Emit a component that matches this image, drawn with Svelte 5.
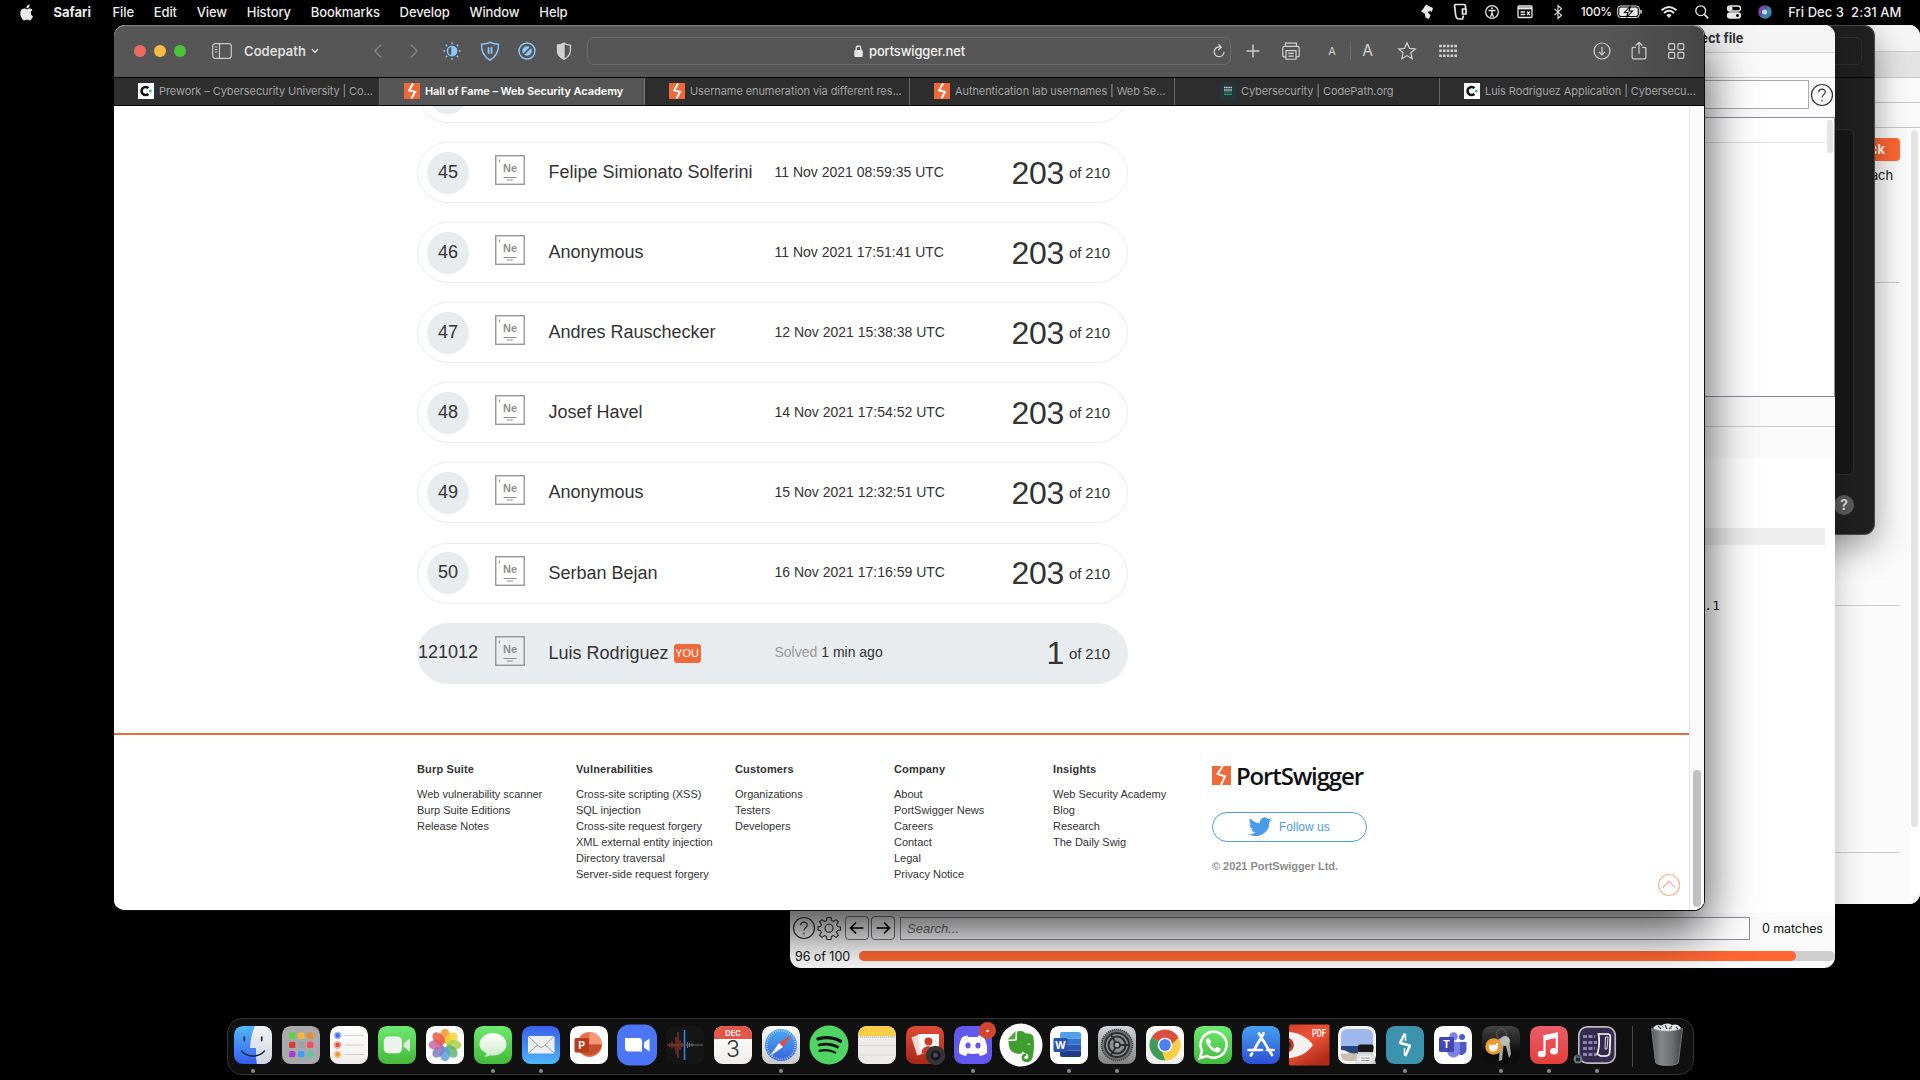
<script>
  const menus = ['File', 'Edit', 'View', 'History', 'Bookmarks', 'Develop', 'Window', 'Help'];

  const tabs = [
    { icon: 'code', title: 'Prework – Cybersecurity University | Co...' },
    { icon: 'bolt', title: 'Hall of Fame – Web Security Academy', active: true },
    { icon: 'bolt', title: 'Username enumeration via different res...' },
    { icon: 'bolt', title: 'Authentication lab usernames | Web Se...' },
    { icon: 'org', title: 'Cybersecurity | CodePath.org', short: true },
    { icon: 'code', title: 'Luis Rodriguez Application | Cybersecu...' }
  ];

  const rows = [
    { rank: '45', name: 'Felipe Simionato Solferini', date: '11 Nov 2021 08:59:35 UTC' },
    { rank: '46', name: 'Anonymous', date: '11 Nov 2021 17:51:41 UTC' },
    { rank: '47', name: 'Andres Rauschecker', date: '12 Nov 2021 15:38:38 UTC' },
    { rank: '48', name: 'Josef Havel', date: '14 Nov 2021 17:54:52 UTC' },
    { rank: '49', name: 'Anonymous', date: '15 Nov 2021 12:32:51 UTC' },
    { rank: '50', name: 'Serban Bejan', date: '16 Nov 2021 17:16:59 UTC' }
  ];

  const columns = [
    { title: 'Burp Suite', links: ['Web vulnerability scanner', 'Burp Suite Editions', 'Release Notes'] },
    {
      title: 'Vulnerabilities',
      links: ['Cross-site scripting (XSS)', 'SQL injection', 'Cross-site request forgery', 'XML external entity injection', 'Directory traversal', 'Server-side request forgery']
    },
    { title: 'Customers', links: ['Organizations', 'Testers', 'Developers'] },
    { title: 'Company', links: ['About', 'PortSwigger News', 'Careers', 'Contact', 'Legal', 'Privacy Notice'] },
    { title: 'Insights', links: ['Web Security Academy', 'Blog', 'Research', 'The Daily Swig'] }
  ];

  const petals = ['#f39a2b', '#f6d232', '#a9cf46', '#5fb574', '#5d9fe0', '#7d7fc4', '#c268a8', '#ee5a45'];
  const pads = ['#5fd13c', '#f5b73c', '#ee8a2c', '#d8412c', '#9aa3ab', '#f0505c', '#a53fd0', '#3d9df2', '#5cc9a6'];

  const dock = [
    { id: 'finder', on: true }, { id: 'launchpad' }, { id: 'reminders' }, { id: 'facetime' }, { id: 'photos' },
    { id: 'messages', on: true }, { id: 'mail', on: true }, { id: 'powerpoint' }, { id: 'zoom' }, { id: 'voice' },
    { id: 'calendar' }, { id: 'safari', on: true }, { id: 'spotify' }, { id: 'notes' }, { id: 'booth' },
    { id: 'discord', on: true }, { id: 'evernote' }, { id: 'word', on: true }, { id: 'settings', on: true }, { id: 'chrome' },
    { id: 'whatsapp' }, { id: 'appstore' }, { id: 'pdf' }, { id: 'preview' }, { id: 'burp', on: true },
    { id: 'teams' }, { id: 'keychain', on: true }, { id: 'music', on: true }, { id: 'keyboard', on: true }
  ];
</script>

{#snippet favicon(kind)}
  <svg class="favicon" viewBox="0 0 16 16">
    {#if kind === 'code'}
      <rect width="16" height="16" fill="#fff" />
      <path d="M10.400 5.200A4 4 0 1 0 10.400 10.800" fill="none" stroke="#111" stroke-width="2.600" />
      <circle cx="12.300" cy="8" r="1.500" fill="#3fc28a" />
    {:else if kind === 'bolt'}
      <rect width="16" height="16" fill="#f0693a" />
      <path d="M9 .6 5.200 7.400 11 8.800 7.600 15.400" fill="none" stroke="#fff" stroke-width="2" />
    {:else}
      <rect width="16" height="16" fill="#25353d" />
      <path d="M4 4.500h8M4 7h8" stroke="#c3ced1" stroke-width="1.400" stroke-dasharray="1.600 .5" />
      <path d="M4 9h8M4 11.400h8" stroke="#2a9a78" stroke-width="1.200" />
    {/if}
  </svg>
{/snippet}

{#snippet element()}
  <svg class="element" viewBox="0 0 30 30">
    <rect x=".75" y=".75" width="28.500" height="28.500" fill="none" stroke="#8e8e8e" stroke-width="1.300" />
    <path d="M4.300 4.500v3" stroke="#8e8e8e" />
    <text x="15" y="17.200" text-anchor="middle">Ne</text>
    <path d="M8.500 22.500h13M12 25h6" stroke="#8e8e8e" stroke-width="1.100" />
  </svg>
{/snippet}

{#snippet appIcon(id)}
  <svg class="app" viewBox="-4 -4 46 46">
    {#if id === 'finder'}
      <rect width="38" height="38" rx="8.800" fill="url(#g-finder)" />
      <path d="M21 0h8.200A8.800 8.800 0 0 1 38 8.800v20.400a8.800 8.800 0 0 1-8.800 8.800H23c-1-5-1-9-1-16h-6C16.400 14 18 6 21 0z" fill="url(#g-face)" />
      <path d="M10.300 11v3.600M27.700 11v3.600" stroke="#152a44" stroke-width="1.700" stroke-linecap="round" />
      <path d="M7.500 25c6 6.700 17 6.700 23 0" fill="none" stroke="#152a44" stroke-width="1.400" stroke-linecap="round" />
    {:else if id === 'launchpad'}
      <rect width="38" height="38" rx="8.800" fill="#a9a9ab" />
      {#each pads as pad, i}
        <rect x={7 + (i % 3) * 9} y={6.5 + Math.floor(i / 3) * 9.2} width="6.400" height="6.400" rx="1.500" fill={pad} />
      {/each}
    {:else if id === 'reminders'}
      <rect width="38" height="38" rx="8.800" fill="url(#g-white)" />
      <path d="M14.500 9.500H34M14.500 19H34M14.500 28.500H34" stroke="#c9c9c9" stroke-width=".9" />
      <g fill="none" stroke-width=".6">
        <circle cx="7.600" cy="9.500" r="3.300" stroke="#3a6ff0" /><circle cx="7.600" cy="19" r="3.300" stroke="#ea4c39" /><circle cx="7.600" cy="28.500" r="3.300" stroke="#eb9a2b" />
      </g>
      <circle cx="7.600" cy="9.500" r="2.400" fill="#3a6ff0" /><circle cx="7.600" cy="19" r="2.400" fill="#ea4c39" /><circle cx="7.600" cy="28.500" r="2.400" fill="#eb9a2b" />
    {:else if id === 'facetime'}
      <rect width="38" height="38" rx="8.800" fill="url(#g-green)" />
      <rect x="5.800" y="10.500" width="18.200" height="16.800" rx="4.500" fill="#edf3ec" /><path d="M25.500 17.200 32 12.200v13.600l-6.500-5z" fill="#dfe9dd" />
    {:else if id === 'photos'}
      <rect width="38" height="38" rx="8.800" fill="#fff" />
      {#each petals as petal, i}
        <ellipse cx="19" cy="10" rx="5" ry="7.300" fill={petal} opacity=".86" transform={`rotate(${i * 45} 19 19)`} />
      {/each}
    {:else if id === 'messages'}
      <rect width="38" height="38" rx="8.800" fill="url(#g-green)" />
      <path d="M10 30.500c2-.8 2.500-2 2.600-3.200C8 25.300 5.500 22 5.500 18.200 5.500 12 11.500 7 19 7s13.500 5 13.500 11.200S26.500 29.500 19 29.500c-1 0-2-.1-3-.3-1.500 1-3.500 1.500-6 1.300z" fill="url(#g-bubble)" />
    {:else if id === 'mail'}
      <rect width="38" height="38" rx="8.800" fill="url(#g-mail)" />
      <rect x="6" y="10" width="26.500" height="17.500" rx="1.500" fill="#eeeff0" />
      <path d="m6.500 10.500 10.500 10q2.200 2 4.400 0l10.500-10M6.500 27l9-8M32 27l-9-8" fill="none" stroke="#85888c" stroke-width=".8" />
    {:else if id === 'powerpoint'}
      <rect width="38" height="38" rx="8.800" fill="#fff" />
      <circle cx="19.500" cy="18.500" r="12.500" fill="#e9714a" /><path d="M19.500 6v12.500H32A12.500 12.500 0 0 0 19.500 6z" fill="#f59a77" /><path d="M8 18.500h24a12.500 12.500 0 0 1-24 3z" fill="#c6502d" />
      <rect x="4.500" y="12" width="14.500" height="14.500" rx="1.500" fill="#b83b1c" /><text class="office" x="11.700" y="22.900">P</text>
    {:else if id === 'zoom'}
      <rect x="-1" y="-1.500" width="40" height="41" rx="12.500" fill="#4c76f5" />
      <path d="M7 12h14a3 3 0 0 1 3 3v10.500H10.500a3.500 3.500 0 0 1-3.500-3.500zM26 16.500l5.500-4v13l-5.500-4z" fill="#fff" />
    {:else if id === 'voice'}
      <rect width="38" height="38" rx="8.800" fill="#161616" />
      <path d="M1 19h17M4 17v4M6 15.500v7M8 17.500v4M10 11v17M12 6v26M14 14v10M16 17v4" stroke="#8e392d" stroke-width="1.200" />
      <path d="M20 19h17M21.500 16v6M23.500 17v4M26 17.500v3" stroke="#6b6b6b" stroke-width="1.200" />
      <path d="M18.500 4v30" stroke="#3583d8" stroke-width="1.600" />
    {:else if id === 'calendar'}
      <rect width="38" height="38" rx="8.800" fill="url(#g-white)" />
      <path d="M0 13V8.800A8.800 8.800 0 0 1 8.800 0h20.400A8.800 8.800 0 0 1 38 8.800V13z" fill="#e2574a" />
      <text class="month" x="19" y="9.700">DEC</text><text class="day" x="19" y="31">3</text>
    {:else if id === 'safari'}
      <rect width="38" height="38" rx="8.800" fill="url(#g-silver)" />
      <circle cx="19" cy="19" r="16" fill="url(#g-compass)" /><circle cx="19" cy="19" r="14.300" fill="none" stroke="#dceafb" stroke-width="2" stroke-dasharray=".6 1.650" />
      <path d="m30 9-13 8 4 4z" fill="#e64a3c" /><path d="m8 30 9-13 4 4z" fill="#fff" />
    {:else if id === 'spotify'}
      <circle cx="19" cy="19" r="19.500" fill="#50d565" />
      <g fill="none" stroke="#111" stroke-linecap="round"><path d="M8 12.800c8-2 16-1.200 22.500 2.400" stroke-width="3.400" /><path d="M9 19c7-1.600 13-1 18.800 2" stroke-width="2.700" /><path d="M9.500 24.800c6-1.300 11-.8 15.800 1.800" stroke-width="2.200" /></g>
    {:else if id === 'notes'}
      <rect width="38" height="38" rx="8.800" fill="#ecebe7" />
      <path d="M0 10V8.800A8.800 8.800 0 0 1 8.800 0h20.400A8.800 8.800 0 0 1 38 8.800V10z" fill="#f7cd45" />
      <path d="M0 19.500h38M0 29h38" stroke="#d0cfca" stroke-width=".7" /><path d="M0 11h38" stroke="#a7a49a" stroke-width="1" stroke-dasharray="1 1" />
    {:else if id === 'booth'}
      <rect width="38" height="38" rx="8.800" fill="url(#g-booth)" />
      <path d="m5 11 9-3 5 19-8 3z" fill="#f3d8d2" stroke="#b9321f" stroke-width=".6" /><path d="M12 8h21v19H14z" fill="#fff" />
      <circle cx="22.500" cy="15.500" r="4" fill="#c93c2a" /><path d="M15.500 27c0-9 14-9 14 0z" fill="#c93c2a" />
      <circle cx="29.500" cy="29.500" r="9.700" fill="#353535" /><circle cx="29.500" cy="29.500" r="5" fill="#17171b" /><circle cx="29.500" cy="29" r="2.500" fill="#3c4a60" />
    {:else if id === 'discord'}
      <rect width="38" height="38" rx="8.800" fill="#6358ee" />
      <path d="M13.500 9c-2.500.4-4 1-5.500 2-2.500 4.500-3.500 9-3 15.500 2.500 1.800 4.500 2.500 7 3l1.500-2.800c3.500 1 7.500 1 11 0l1.500 2.800c2.500-.5 4.500-1.200 7-3 .5-6.500-.5-11-3-15.500-1.500-1-3-1.600-5.500-2l-1 1.700c-3-.4-6-.4-9 0z" fill="#fff" transform="translate(0 .5)" />
      <ellipse cx="14" cy="19.500" rx="2.600" ry="3" fill="#6358ee" /><ellipse cx="24" cy="19.500" rx="2.600" ry="3" fill="#6358ee" />
      <circle cx="33.500" cy="4.500" r="8.500" fill="#d4452e" /><circle cx="33.500" cy="5" r="1.200" fill="#fff" />
    {:else if id === 'evernote'}
      <circle cx="19" cy="19" r="21.500" fill="#fff" />
      <path d="M13.500 5v6.500q0 2-2 2H5.500z" fill="#3e9e2f" opacity=".9" /><path d="M15 5.500q6-1.500 8.500 1.700c5 .3 7.500.8 8 4.800.9 7 .5 13-.8 19-.8 3.700-3 5-6 5-4.500 0-5.500-3-5-5.500.5-2 2-3.200 4.500-3v2.500c-1.300 0-1.900.5-1.900 1.500 0 1.200 1 1.600 2.200 1.500 1.700-.2 2.200-1.700 1.700-3.500-.6-2.200-4-2.200-5.300-4-.8 1.700-2.400 2.700-5.100 2.200-6-1-9.300-3.500-9.300-12.700h6q2.500 0 2.500-2.500z" fill="#3e9e2f" />
      <path d="M25 18.500q2-2.500 4 .7-2.200-.9-4-.7z" fill="#fff" />
    {:else if id === 'word'}
      <rect width="38" height="38" rx="8.800" fill="#fff" />
      <path d="M10 8a2 2 0 0 1 2-2h17a2 2 0 0 1 2 2v4.500H10z" fill="#50a0e8" /><path d="M10 12.500h21v6H10z" fill="#3672d0" /><path d="M10 18.500h21v6H10z" fill="#2858b4" /><path d="M10 24.500h21V29a2 2 0 0 1-2 2H12a2 2 0 0 1-2-2z" fill="#1f3b88" />
      <rect x="3.500" y="12" width="14" height="14" rx="1.500" fill="#2a52b0" /><text class="office" x="10.500" y="22.700">W</text>
    {:else if id === 'settings'}
      <rect width="38" height="38" rx="8.800" fill="url(#g-settings)" />
      <circle cx="19" cy="19" r="15.500" fill="#6e6f71" stroke="#3e3e40" stroke-width="1.500" stroke-dasharray="1.200 .9" /><circle cx="19" cy="19" r="12" fill="#8d8e90" stroke="#303032" stroke-width="2" />
      <circle cx="19" cy="19" r="8.500" fill="none" stroke="#2d2d2f" stroke-width="2" /><circle cx="19" cy="19" r="3" fill="#aaa" stroke="#2d2d2f" stroke-width="1.500" />
      <path d="M22 19h10M17.500 16.500l-5-8.500M17.500 21.500l-5 8.500" stroke="#2d2d2f" stroke-width="1.800" />
    {:else if id === 'chrome'}
      <rect width="38" height="38" rx="8.800" fill="url(#g-white)" />
      <path d="M19 19 5.600 11.200A15.500 15.500 0 0 1 32.400 11.200z" fill="#d9503f" /><path d="M19 19l13.400-7.800A15.500 15.500 0 0 1 19 34.500z" fill="#f7ce46" /><path d="M19 19v15.500A15.500 15.500 0 0 1 5.600 11.200z" fill="#3f9b55" />
      <path d="M19 11.500h13.600L25 19z" fill="#d9503f" /><path d="M25.700 22.500 19 34.500l-3-9z" fill="#f7ce46" /><circle cx="19" cy="19" r="7.300" fill="#fff" /><circle cx="19" cy="19" r="5.900" fill="#4f7ff0" />
    {:else if id === 'whatsapp'}
      <rect width="38" height="38" rx="8.800" fill="url(#g-green)" />
      <path d="m6 32 2-7.300A13 13 0 1 1 13 30z" fill="none" stroke="#fff" stroke-width="2.600" />
      <path d="M14 11.500c-2 1-2.500 3.500-1 6.500 2 4 5 7 9 8.300 3 .8 5-1 4.700-3.500l-3.700-2-2 2c-2.500-1-4-2.700-5.200-5l1.600-2z" fill="#fff" />
    {:else if id === 'appstore'}
      <rect width="38" height="38" rx="8.800" fill="url(#g-store)" />
      <path d="M17 7.500l13 21.500M21.500 7.500 12 24M10 27.500l-1.200 2M6.500 24H20M25 24h6.500" stroke="#fff" stroke-width="2.700" stroke-linecap="round" fill="none" />
    {:else if id === 'pdf'}
      <rect x="-1" y="-1.500" width="40.500" height="41" rx="1.500" fill="url(#g-pdf)" />
      <path d="M-1 6c12 1 20 7 24 13-5 7-12 12-24 13z" fill="#f4f2f1" /><path d="M-1 12a7.500 7.500 0 0 1 0 14z" fill="#c83725" /><path d="M-1 15.500a4 4 0 0 1 0 7z" fill="#333" />
      <text class="pdf" x="29" y="11" textLength="14" lengthAdjust="spacingAndGlyphs">PDF</text>
    {:else if id === 'preview'}
      <rect width="38" height="38" rx="8.800" fill="#f2f2f0" />
      <path d="M3 9a6 6 0 0 1 6-6h20a6 6 0 0 1 6 6v12H3z" fill="#a0b9ec" /><path d="M3 20h32v8H3z" fill="#29477c" /><path d="M3 27c8-3 10 2 16 0v8H9a6 6 0 0 1-6-6z" fill="#c9bfae" /><path d="M3 24q5 0 8 3-5 1-8 0z" fill="#fff" />
      <path d="M20 26h15l3 12H17z" fill="#ddd" opacity=".9" /><rect x="20" y="18.500" width="15.500" height="7.500" rx="2" fill="#181818" /><path d="M22 30h11v6H21z" fill="#f5f5f5" /><path d="M23 32h9M23 34.500h8" stroke="#777" stroke-width=".8" />
    {:else if id === 'burp'}
      <rect width="38" height="38" rx="8.800" fill="#3c93ae" />
      <path d="M18.800 7.500 14 17l10 2.500-4.700 10.500" fill="none" stroke="#fff" stroke-width="2.600" stroke-linejoin="bevel" />
      <path d="M19.500 8v7M18.500 22v7.500" stroke="#fff" stroke-width="1.500" />
    {:else if id === 'teams'}
      <rect width="38" height="38" rx="8.800" fill="#fff" />
      <circle cx="28" cy="11" r="3" fill="#5059c9" /><path d="M24 16h8.500v8a5.500 5.500 0 0 1-8.500 4z" fill="#5059c9" /><circle cx="19.500" cy="10.500" r="4.200" fill="#7b83eb" /><path d="M13 16h13v9a6.500 6.500 0 0 1-13 0z" fill="#7b83eb" />
      <rect x="5" y="11" width="15" height="15" rx="1.500" fill="#4048b4" /><text class="office" x="12.500" y="22.200">T</text>
    {:else if id === 'keychain'}
      <rect width="38" height="38" rx="8.800" fill="url(#g-dark)" />
      <circle cx="19.500" cy="8" r="5" fill="none" stroke="#55514a" stroke-width="1.500" />
      <path d="m18 13 4 1-2 20-3 1zM22 12l5 1 2 15-2 4zM15 14l5-2-2 13-3 3z" fill="#a7a9a5" /><circle cx="23" cy="15" r="5" fill="#b9bbb7" />
      <circle cx="11.500" cy="20.500" r="8.200" fill="#ef9a2e" /><path d="M7 18l3 1.500c1-1.500 3-1 4 0v-2.500h2v4.500q-1 4-5 4-4-.5-4-4z" fill="#fff" />
    {:else if id === 'music'}
      <rect width="38" height="38" rx="8.800" fill="url(#g-music)" />
      <path d="M14.500 27.500V10.200L26.800 7.500V24.500" fill="none" stroke="#fff" stroke-width="2.200" /><path d="M14.500 10.500v4l12.300-2.700v-4z" fill="#fff" /><ellipse cx="11.700" cy="28" rx="3.900" ry="3.200" fill="#fff" /><ellipse cx="24" cy="25.200" rx="3.900" ry="3.200" fill="#fff" />
    {:else if id === 'keyboard'}
      <rect x=".8" y=".8" width="36.400" height="36.400" rx="8.500" fill="#342c50" stroke="#bcb9bd" stroke-width="1.700" />
      <path d="M5 10.500h12M5 16.500h14M5 22.500h12M5 28.500h14" stroke="#8a83ac" stroke-width="3" stroke-dasharray="4 1.500" />
      <path d="M20.500 8h9q3 0 2.800 3l-.6 15q-.2 4-4 4h-5.200l-3.200-2q3-9 1.200-20z" fill="#342c50" stroke="#fff" stroke-width="1.700" /><path d="M27.500 11h2.500l-1 12h-2z" fill="none" stroke="#ddd" stroke-width="1" />
      <circle cx="0" cy="33" r="4.500" fill="#6b7780" /><rect x="-2" y="32" width="4" height="3.200" fill="#1d2226" /><path d="M-1.200 32v-1.500a1.200 1.200 0 0 1 2.400 0V32" fill="none" stroke="#1d2226" stroke-width=".8" />
    {/if}
  </svg>
{/snippet}

<svg class="defs" width="0" height="0" aria-hidden="true">
  <defs>
    <linearGradient id="g-finder" x2="0" y2="1"><stop stop-color="#4fb8f8" /><stop offset="1" stop-color="#3a5cf0" /></linearGradient>
    <linearGradient id="g-face" x2="0" y2="1"><stop stop-color="#f3f3f5" /><stop offset="1" stop-color="#cfd5e2" /></linearGradient>
    <linearGradient id="g-white" x2="0" y2="1"><stop stop-color="#fff" /><stop offset="1" stop-color="#efeeec" /></linearGradient>
    <linearGradient id="g-green" x2="0" y2="1"><stop stop-color="#6cea70" /><stop offset="1" stop-color="#44b93a" /></linearGradient>
    <linearGradient id="g-bubble" x2="0" y2="1"><stop stop-color="#fff" /><stop offset="1" stop-color="#cdebc8" /></linearGradient>
    <linearGradient id="g-mail" x2="0" y2="1"><stop stop-color="#3a5fec" /><stop offset="1" stop-color="#4cb6f8" /></linearGradient>
    <linearGradient id="g-compass" x2="0" y2="1"><stop stop-color="#49a9f0" /><stop offset="1" stop-color="#3a64dc" /></linearGradient>
    <linearGradient id="g-silver" x2="0" y2="1"><stop stop-color="#fbfbfb" /><stop offset="1" stop-color="#c9cacc" /></linearGradient>
    <linearGradient id="g-booth" x2="0" y2="1"><stop stop-color="#e14a35" /><stop offset="1" stop-color="#a82717" /></linearGradient>
    <linearGradient id="g-settings" x2="0" y2="1"><stop stop-color="#ccd6dd" /><stop offset="1" stop-color="#85827f" /></linearGradient>
    <linearGradient id="g-store" x2="0" y2="1"><stop stop-color="#46a0ee" /><stop offset="1" stop-color="#2d4fd8" /></linearGradient>
    <linearGradient id="g-pdf" x2=".6" y2="1"><stop stop-color="#d6402e" /><stop offset=".5" stop-color="#ee5337" /><stop offset="1" stop-color="#b32c1c" /></linearGradient>
    <linearGradient id="g-dark" x2="0" y2="1"><stop stop-color="#434343" /><stop offset=".7" stop-color="#0c0c0c" /></linearGradient>
    <linearGradient id="g-music" x2="0" y2="1"><stop stop-color="#e85c6a" /><stop offset="1" stop-color="#e63f3b" /></linearGradient>
    <linearGradient id="g-bin"><stop stop-color="#555b5e" /><stop offset=".3" stop-color="#85898b" /><stop offset=".65" stop-color="#6c7073" /><stop offset="1" stop-color="#404447" /></linearGradient>
    <linearGradient id="g-siri" x1="0" x2="1" y1=".2" y2=".8"><stop stop-color="#b0468f" /><stop offset=".35" stop-color="#5a4bb0" /><stop offset=".65" stop-color="#3f8f9a" /><stop offset="1" stop-color="#3a62d8" /></linearGradient>
  </defs>
</svg>

<div class="desktop">
  <!-- Rearmost light window -->
  <section class="window back">
    <div class="back-title"></div>
    <div class="back-strip"></div>
    <div class="back-line"></div>
    <div class="back-line"></div>
    <div class="back-body">
      <div class="back-main">
        <div class="panel first"><span class="attack">ck</span><span class="attach">ach</span></div>
        <div class="panel second"></div>
        <div class="panel third"></div>
        <div class="panel fourth"></div>
      </div>
      <div class="back-scroll"><i></i></div>
    </div>
  </section>

  <!-- Dark window -->
  <section class="window dark">
    <div class="dark-top"><div class="dark-field"></div></div>
    <div class="dark-panel"></div>
    <span class="dark-help">?</span>
  </section>

  <!-- Burp Suite window -->
  <section class="window burp">
    <header class="burp-title">ect file</header>
    <div class="burp-gap"></div>
    <div class="burp-filter">
      <div class="burp-input"></div>
      <svg class="round-help" viewBox="0 0 24 24"><circle cx="12" cy="12" r="10.500" /><path d="M8.700 9.300c.2-4.400 6.800-4 6.600-.3-.1 2.500-3.300 2.800-3.300 5.500M12 16.800v1.600" /></svg>
    </div>
    <div class="burp-list"><div class="burp-head"></div><i></i></div>
    <div class="burp-tabs"></div>
    <div class="burp-sub"></div>
    <div class="burp-editor">
      <div class="hl"></div>
      <code>.1</code>
    </div>
    <div class="burp-search">
      <svg class="round-help" viewBox="0 0 24 24"><circle cx="12" cy="12" r="10.500" /><path d="M8.700 9.300c.2-4.400 6.800-4 6.600-.3-.1 2.500-3.300 2.800-3.300 5.500M12 16.800v1.600" /></svg>
      <svg class="gear" viewBox="0 0 24 24"><path d="M10 1.500h4l.5 3 2 .9 2.600-1.800 2.300 2.300-1.800 2.600.9 2 3 .5v3l-3 .5-.9 2 1.800 2.600-2.300 2.300-2.600-1.800-2 .9-.5 3h-4l-.5-3-2-.9-2.600 1.800-2.300-2.300 1.800-2.600-.9-2-2.500-.5v-3l2.500-.5.9-2-1.800-2.600 2.300-2.300 2.600 1.800 2-.9z" /><circle cx="12" cy="12.300" r="4" /></svg>
      <span class="arrow"><svg viewBox="0 0 24 24"><path d="M19 12H5.500M11 6l-6 6 6 6" /></svg></span>
      <span class="arrow"><svg viewBox="0 0 24 24"><path d="M5 12h13.500M13 6l6 6-6 6" /></svg></span>
      <div class="search-box">Search...</div>
      <span class="matches">0 matches</span>
    </div>
    <div class="burp-progress"><span>96 of 100</span><div class="track"><div class="fill"></div></div></div>
  </section>

  <!-- Safari window -->
  <section class="window safari">
    <header class="toolbar">
      <div class="lights"><i class="red"></i><i class="yellow"></i><i class="green"></i></div>
      <svg class="sidebar" viewBox="0 0 20 16"><rect x=".7" y=".7" width="18.600" height="14.600" rx="2.500" /><path d="M7.500 1v14M2.800 4h2.500M2.800 6.500h2.500M2.800 9h2.500" /></svg>
      <span class="profile">Codepath</span>
      <svg class="chev" viewBox="0 0 8 6"><path d="m1 1.300 3 3 3-3" /></svg>
      <div class="nav-icons">
        <svg class="dim" viewBox="0 0 24 24"><path d="m15.500 5-7 7 7 7" /></svg>
        <svg class="dim" viewBox="0 0 24 24"><path d="m8.500 5 7 7-7 7" /></svg>
        <svg class="blue" viewBox="0 0 24 24"><circle cx="12" cy="12" r="5" /><path d="M12 7a5 5 0 0 1 0 10z" fill="#8cc8ff" /><path d="M12 2.500v2M12 19.500v2M2.500 12h2M19.500 12h2M5.300 5.300l1.400 1.400M17.300 17.300l1.400 1.400M18.700 5.300l-1.400 1.400M6.700 17.300l-1.400 1.400" /></svg>
        <svg class="blue" viewBox="0 0 24 24"><path d="M2.700 4.700q4.800 0 9.300-2 4.500 2 9.300 2 .2 12-9.300 17.300Q2.500 16.700 2.700 4.700z" /><path d="M10.400 8v7M13.600 8v7" stroke-width="1.900" /></svg>
        <svg class="blue" viewBox="0 0 24 24"><circle cx="12" cy="12" r="8.700" /><circle cx="12" cy="12" r="5.200" fill="#8cc8ff" stroke="none" /><path d="m7 17 10-10" stroke="#565656" stroke-width="1.800" /></svg>
        <svg class="pale" viewBox="0 0 24 24"><path d="M12 3.500q3 2 7 2.200V12q-.5 6-7 9-6.500-3-7-9V5.700q4-.2 7-2.200z" /><path d="M12 3.500V21q-6.500-3-7-9V5.700q4-.2 7-2.200z" fill="#d0d0d0" /></svg>
      </div>
      <div class="url">
        <svg class="lock" viewBox="0 0 9 12"><rect x=".3" y="5" width="8.400" height="7" rx="1.200" /><path d="M2.200 5.500V3.300a2.300 2.300 0 0 1 4.600 0v2.200" fill="none" stroke="#e6e6e6" stroke-width="1.300" /></svg>
        <span>portswigger.net</span>
        <svg class="reload" viewBox="0 0 14 16"><path d="M9 4.300A4.900 4.900 0 1 0 12 9M6.500 1.300 9.300 4.300 6.300 7" /></svg>
      </div>
      <div class="right-icons">
        <svg viewBox="0 0 24 24"><path d="M12 5v14M5 12h14" stroke-width="1.600" /></svg>
        <svg viewBox="0 0 24 24"><path d="M6 7V3.500h12V7M6 18.500H4.500Q3 18.500 3 17V9q0-2 2-2h14q2 0 2 2v8q0 1.500-1.500 1.500H18M6.500 11.500h11V21h-11zM9 14.500h6M9 17.500h6" /></svg>
        <span class="small-a">A</span>
        <span class="big-a">A</span>
        <svg viewBox="0 0 24 24"><path d="m12 3 2.700 6.100 6.300.6-4.800 4.300 1.500 6.500L12 17l-5.700 3.500L7.800 14 3 9.700l6.300-.6z" /></svg>
        <svg viewBox="0 0 24 24"><path d="M2.400 6.500h19.400M2.400 11.800h19.400M2.400 17.100h19.400" stroke-width="2.800" stroke-dasharray="2.800 1.350" /></svg>
        <svg class="after-gap" viewBox="0 0 24 24"><circle cx="12" cy="12" r="8.700" /><path d="M12 7.500v8.500M8.700 13l3.300 3.300 3.300-3.300" /></svg>
        <svg viewBox="0 0 24 24"><path d="M8.500 8H6Q4.500 8 4.500 9.500V19Q4.500 20.500 6 20.500h12q1.500 0 1.500-1.500V9.500Q19.500 8 18 8h-2.500M12 15V2.500M8.500 6 12 2.500 15.500 6" /></svg>
        <svg viewBox="0 0 24 24"><rect x="4" y="4" width="6.500" height="6.500" rx="1.200" /><rect x="14" y="4" width="6.500" height="6.500" rx="1.200" /><rect x="4" y="13.500" width="6.500" height="6.500" rx="1.200" /><rect x="14" y="13.500" width="6.500" height="6.500" rx="1.200" /></svg>
      </div>
    </header>

    <nav class="tabs">
      {#each tabs as tab}
        <div class="tab" class:active={tab.active} class:short={tab.short}>
          {@render favicon(tab.icon)}<span>{tab.title}</span>
        </div>
      {/each}
    </nav>

    <div class="page">
      <main>
        <div class="board">
          <div class="row"><span class="rank"></span></div>
          {#each rows as row}
            <div class="row">
              <span class="rank">{row.rank}</span>
              {@render element()}
              <span class="name">{row.name}</span>
              <span class="date">{row.date}</span>
              <span class="score"><b>203</b> of 210</span>
            </div>
          {/each}
          <div class="row me">
            <span class="rank">121012</span>
            {@render element()}
            <span class="name">Luis Rodriguez <em>YOU</em></span>
            <span class="date"><small>Solved</small> 1 min ago</span>
            <span class="score"><b>1</b> of 210</span>
          </div>
        </div>

        <footer>
          {#each columns as column}
            <div class="col">
              <h4>{column.title}</h4>
              {#each column.links as link}<a href="#top">{link}</a>{/each}
            </div>
          {/each}
          <div class="brand">
            <div class="logo">
              <svg viewBox="0 0 19 19"><rect width="19" height="19" fill="#f0693a" /><path d="M10.800 0 5.500 8l7.500 2.300L9 19" fill="none" stroke="#fff" stroke-width="2" /></svg>
              <span>PortSwigger</span>
            </div>
            <div class="follow">
              <svg viewBox="0 0 24 24"><path d="M23.600 4.900a9.700 9.700 0 0 1-2.800.8 4.900 4.900 0 0 0 2.100-2.700c-1 .6-2 1-3.100 1.200a4.900 4.900 0 0 0-8.400 4.500A14 14 0 0 1 1.300 3.500a4.900 4.900 0 0 0 1.500 6.600c-.8 0-1.600-.2-2.200-.6a4.900 4.900 0 0 0 3.900 4.900c-.7.2-1.500.2-2.200.1a4.900 4.900 0 0 0 4.600 3.400A9.900 9.900 0 0 1-.4 19.900a14 14 0 0 0 21.500-12.400c1-.7 1.800-1.600 2.500-2.600z" /></svg>
              <span>Follow us</span>
            </div>
            <p>© 2021 PortSwigger Ltd.</p>
          </div>
        </footer>
        <svg class="to-top" viewBox="0 0 24 24"><circle cx="12" cy="12" r="10.500" /><path d="m6 14.500 6-6.500 6 6.500" /></svg>
      </main>
      <div class="scrollbar"><i></i></div>
    </div>
  </section>

  <!-- Menu bar -->
  <header class="menubar">
    <svg class="apple" viewBox="2 1 20 21"><path d="M17.100 12.700c0-2.300 1.900-3.400 2-3.500-1.100-1.600-2.800-1.800-3.400-1.800-1.400-.1-2.800.9-3.500.9s-1.800-.9-3-.8c-1.500 0-3 .9-3.800 2.300-1.600 2.800-.4 7 1.200 9.300.8 1.100 1.700 2.400 2.900 2.300 1.200 0 1.600-.7 3-.7s1.800.7 3.100.7c1.300 0 2.100-1.100 2.800-2.200.9-1.300 1.300-2.500 1.300-2.600 0 0-2.600-1-2.600-3.900zM14.700 5.800c.6-.8 1.100-1.900 1-3-1 0-2.100.6-2.800 1.400-.6.7-1.200 1.800-1 2.900 1.100.1 2.200-.5 2.800-1.300z" /></svg>
    <b>Safari</b>
    {#each menus as menu}<span class="menu">{menu}</span>{/each}
    <div class="extras">
      <svg viewBox="0 0 20 20"><path d="M9 2.500 16 6l-1.200 4-2.300-1.200-1.800 1.700 2.800 2.500-1.500 4-3.500-1.500-.8-4L4 9.500l2-2.500z" fill="#e8e8e8" stroke="none" /></svg>
      <svg viewBox="0 0 20 20"><path d="M4.500 2.500h9.500q1.500 0 1.500 2v3M4.500 2.500l1 9.500q.5 5 3.500 5h3.500l1-3.500M12.500 7h3.500v5h-3.500z" stroke-width="1.700" /></svg>
      <svg viewBox="0 0 20 20"><circle cx="10" cy="10" r="6.300" /><circle cx="10" cy="6.300" r="1" fill="#e8e8e8" stroke="none" /><path d="M6.500 8.500h7M10 8.500v3M10 11l-1.500 4M10 11l1.500 4" /></svg>
      <svg viewBox="0 0 20 20"><rect x="3" y="4" width="14" height="11.500" rx="1" /><path d="M3 6.300h14" stroke-width="2.200" /><path d="M5.500 10H10M5.500 12.500H10M12 9.500l3 3.500M15 9.500 12 13" /></svg>
      <svg viewBox="0 0 20 20"><path d="m6.500 6.800 7 6.400-3.500 3.300v-13l3.500 3.300-7 6.400" stroke-width="1.100" /></svg>
      <span>100%</span>
      <svg class="battery" viewBox="0 0 26 14"><rect x=".7" y="1" width="21.600" height="11.500" rx="3" stroke-width="1" /><rect x="2.300" y="2.600" width="18.400" height="8.300" rx="1.600" fill="#e8e8e8" stroke="none" /><path d="M24 5v3.500" stroke-width="1.500" /><path d="M13.500 1 7.500 7.500h3.500L9.500 12.500 15.500 6H12z" fill="#e8e8e8" stroke="#000" stroke-width="1.100" /></svg>
      <svg viewBox="0 0 20 20"><path d="M2.500 8.300q7.500-6.500 15 0M5 11q5-4.400 10 0" stroke-width="2" /><path d="m10 16-2.700-3q2.700-2 5.400 0z" fill="#e8e8e8" stroke="none" /></svg>
      <svg viewBox="0 0 20 20"><circle cx="8.700" cy="8.700" r="4.900" /><path d="m12.300 12.300 4 4" stroke-width="1.700" /></svg>
      <svg viewBox="0 0 20 20"><rect x="3.500" y="4" width="13" height="5" rx="2.500" /><circle cx="6.300" cy="6.500" r="1.700" fill="#e8e8e8" /><rect x="3.500" y="11" width="13" height="5" rx="2.500" fill="#e8e8e8" /><circle cx="13.500" cy="13.500" r="1.500" fill="#000" stroke="none" /></svg>
      <svg viewBox="0 0 20 20"><circle cx="10" cy="10" r="6.800" fill="url(#g-siri)" stroke="none" /><circle cx="9.500" cy="10" r="2.500" fill="#e6ffff" opacity=".75" stroke="none" /></svg>
      <span class="clock">Fri Dec 3&nbsp; 2:31 AM</span>
    </div>
  </header>

  <!-- Dock -->
  <div class="dock">
    {#each dock as app}
      <div class="slot">{@render appIcon(app.id)}<i class:on={app.on}></i></div>
    {/each}
    <div class="divider"></div>
    <svg class="bin" viewBox="0 0 34 44">
      <path d="M3 5Q7 0 11 2.500 17-1 22 2q6-2 9 3l-4 4H7z" fill="#e4e6e8" /><path d="m8 3 3 3M15 2l2 4M22 3l-3 3M26 4l2 2" stroke="#3d5a78" stroke-width="1.300" /><path d="m12 3 2 2M20 4l2 2" stroke="#b88b35" />
      <path d="M1.500 5.500Q17 11 32.500 5.500L28.500 39q-1 3.500-11.500 3.500T5.500 39z" fill="url(#g-bin)" stroke="#8d9193" stroke-width=".7" />
    </svg>
  </div>
</div>

<style>
  :global(body) { margin: 0; background: #000; overflow: hidden; }
  * { box-sizing: border-box; }
  .defs { position: absolute; }
  .desktop { position: relative; width: 1920px; height: 1080px; background: #000; overflow: hidden; font-family: Inter, "Liberation Sans", sans-serif; }
  .window { position: absolute; top: 25px; overflow: hidden; display: flex; flex-direction: column; }
  svg { display: block; flex: none; }

  /* Menu bar */
  .menubar { position: absolute; inset: 0 0 auto 0; height: 25px; padding-left: 18px; display: flex; align-items: center; background: #000; color: #ececec; font-size: 13px; font-weight: 500; padding-bottom: 2px; }
  .apple { width: 17px; height: 18px; fill: #e8e8e8; margin-right: 18.500px; }
  .menubar b { font-weight: 700; width: 59px; }
  .menu { margin-right: 19.800px; letter-spacing: -.1px; white-space: nowrap; }
  .extras { margin-left: auto; display: grid; grid-template-columns: 33.500px 31px 33px 33px 34px 37px 35px 43px 24px 40px 22px 144px; align-items: center; justify-items: center; height: 23px; }
  .extras svg { width: 20px; height: 20px; fill: none; stroke: #e8e8e8; stroke-width: 1.300; margin-top: 1px; }
  .extras .battery { width: 26px; height: 14px; }
  .extras span { font-size: 12px; letter-spacing: -.3px; white-space: nowrap; justify-self: end; }
  .extras .clock { font-size: 13px; letter-spacing: .05px; justify-self: end; padding-right: 18.500px; }

  /* Rear window */
  .back { left: 1560px; width: 360px; height: 879px; border-radius: 11px; background: #fafafa; }
  .back-title { height: 27px; background: #f5f5f5; border-bottom: 1px solid #ccc; }
  .back-strip { height: 26px; background: #e4e4e4; border-bottom: 1px solid #c4c8c8; }
  .back-line { height: 25px; border-bottom: 1px solid #c4c9c8; }
  .back-body { flex: 1; display: flex; }
  .back-main { flex: 1; padding-right: 10px; }
  .back-scroll { width: 10px; background: #fff; padding: 2px 1px; }
  .back-scroll i { display: block; height: 697px; border-radius: 4px; background: #e4e4e4; width: 7px; }
  .panel { border-bottom: 1px solid #ccc; }
  .first { height: 155px; padding-top: 10px; display: flex; flex-direction: column; align-items: flex-end; }
  .second { height: 323px; }
  .third { height: 247px; }
  .fourth { border: 0; }
  .attack { width: 90px; height: 23px; background: #ff6633; border-radius: 4px; color: #fff; font: bold 13px/23px Inter, sans-serif; text-align: right; padding-right: 15px; }
  .attach { font-size: 13px; color: #111; margin: 6px 7px 0 0; letter-spacing: -.1px; }

  /* Dark window */
  .dark { left: 1500px; width: 375px; height: 510px; background: #202020; border: 1px solid #4a4a4a; border-left: 0; border-radius: 11px; box-shadow: 0 12px 34px rgba(0, 0, 0, .38); align-items: flex-end; }
  .dark-top { height: 52px; width: 100%; border-bottom: 1px solid #000; padding: 11px 12px 0 0; flex: none; }
  .dark-field { height: 28px; border: 1px solid #2f2f2f; border-radius: 6px; }
  .dark-panel { width: 354px; margin: 51px 20px 0 0; height: 346px; background: #181818; border: 1px solid #2d2d2d; border-radius: 6px; }
  .dark-help { margin: 20px 20px 0 0; width: 20px; height: 20px; border-radius: 50%; background: #5a5a5a; color: #e0e0e0; font-size: 14px; font-weight: 600; line-height: 20px; text-align: center; }

  /* Burp window */
  .burp { left: 790px; width: 1045px; height: 943px; background: #fafafa; border-radius: 11px; box-shadow: 0 10px 30px rgba(0, 0, 0, .25); }
  .burp-title { height: 28px; flex: none; background: #f5f5f5; border-bottom: 1px solid #d0d0d0; text-align: right; padding: 0 91.500px 0 0; font-size: 13px; line-height: 27px; font-weight: 700; color: #333; }
  .burp-gap { height: 25px; flex: none; border-bottom: 1px solid #cfcfcf; }
  .burp-filter { height: 39px; flex: none; display: flex; align-items: flex-start; justify-content: flex-end; padding: 2px 1px 0 0; gap: 1px; }
  .burp-input { width: 900px; height: 29px; border: 1px solid #aaa; background: #fff; }
  .round-help { width: 24px; height: 24px; fill: none; stroke: #333; stroke-width: 1.200; }
  .burp-filter .round-help { margin-top: 3px; }
  .burp-list { height: 280px; border: 1px solid #8e8ba0; background: #fff; display: flex; flex: none; justify-content: flex-end; gap: 2px; padding: 2px 1px; }
  .burp-head { width: 900px; height: 23px; border-bottom: 1px solid #ddd; }
  .burp-list i { width: 6px; height: 33px; border-radius: 3px; background: #e4e4e4; }
  .burp-tabs { height: 30px; border-bottom: 1px solid #ccc; flex: none; }
  .burp-sub { height: 31px; flex: none; }
  .burp-editor { flex: 1; background: #fff; padding-top: 70px; }
  .hl { height: 17px; margin-right: 10px; background: #eee; }
  .burp-editor code { display: block; margin-top: 53px; text-align: right; padding-right: 115px; font: 13px/16px "DejaVu Sans Mono", monospace; color: #222; }
  .burp-search { height: 30px; flex: none; display: flex; align-items: center; padding: 0 0 0 2px; background: #fafafa; }
  .gear { width: 24px; height: 24px; fill: none; stroke: #333; stroke-width: 1.100; margin: 0 4px 0 1px; }
  .arrow { width: 24px; height: 24px; border: 1px solid #77757f; border-radius: 4px; margin-right: 2px; background: rgba(255, 255, 255, .25); }
  .arrow svg { width: 22px; height: 22px; fill: none; stroke: #000; stroke-width: 1.800; }
  .search-box { width: 850px; height: 23px; margin-left: 3px; border: 1px solid #8e8ba0; padding-left: 6px; background: #fff; font: italic 13px/21px "Liberation Sans", sans-serif; color: #6f6f6f; }
  .matches { font-size: 12.500px; margin-left: 12px; color: #111; white-space: nowrap; letter-spacing: -.1px; }
  .burp-progress { height: 25px; flex: none; display: flex; align-items: center; font-size: 12.500px; color: #111; padding: 0 0 0 5px; }
  .burp-progress span { width: 64px; letter-spacing: -.05px; padding-top: 1px; }
  .track { flex: 1; height: 10px; border-radius: 5px; background: #cfcfcf; }
  .fill { width: 937px; height: 10px; border-radius: 5px; background: #ff6633; }

  /* Safari chrome */
  .safari { left: 114px; width: 1591px; height: 886px; border-radius: 11px; background: #fff; border: 1px solid #111; border-width: 0 1px 1px 0; box-shadow: 0 20px 50px rgba(0, 0, 0, .72); }
  .toolbar { height: 52px; flex: none; display: flex; align-items: center; padding: 0 0 2px 20px; background: linear-gradient(90deg, #565656 94%, #464646); border-top: 1px solid #828282; color: #d4d4d4; border-radius: 11px 11px 0 0; }
  .lights { display: flex; gap: 8px; }
  .lights i { width: 12px; height: 12px; border-radius: 50%; }
  .red { background: #ee6a5e; }
  .yellow { background: #f5bd44; }
  .green { background: #4fc03e; }
  .sidebar { width: 20px; height: 16px; margin: 0 12px 0 26px; fill: none; stroke: #c8c8c8; stroke-width: 1.200; }
  .profile { width: 67px; font-size: 13px; font-weight: 600; letter-spacing: .05px; color: #dedede; }
  .chev { width: 8px; height: 6px; fill: none; stroke: #dedede; stroke-width: 1.500; margin-right: 40px; }
  .nav-icons { display: grid; grid-template-columns: 38px 34px 42px 34px 39px 36px; justify-items: center; }
  .nav-icons svg { width: 22px; height: 22px; fill: none; stroke-width: 1.500; }
  .dim { stroke: #858585; }
  .blue { stroke: #8cc8ff; }
  .pale { stroke: #d0d0d0; }
  .url { width: 644px; height: 28px; margin-left: 5px; border: 1px solid #6d6d6d; border-radius: 7px; display: flex; align-items: center; padding: 0 4px 0 265px; color: #f2f2f2; font-size: 13px; font-weight: 500; letter-spacing: -.15px; }
  .lock { width: 9px; height: 12px; fill: #e6e6e6; margin: 0 6px 0 1px; }
  .reload { width: 14px; height: 16px; margin-left: auto; fill: none; stroke: #d4d4d4; stroke-width: 1.200; }
  .right-icons { display: grid; grid-template-columns: 34px 42px 40px 30px 50px 32px 158px 34px 40px; justify-items: center; align-items: center; margin-left: 5px; }
  .right-icons svg { width: 22px; height: 22px; fill: none; stroke: #cfcfcf; stroke-width: 1.300; }
  .right-icons .after-gap { justify-self: end; margin-right: 9px; }
  .small-a { font-size: 11px; width: 40px; text-align: center; }
  .big-a { font-size: 15.500px; width: 35px; text-align: center; border-left: 1px solid #6b6b6b; }
  .tabs { flex: none; height: 29px; display: grid; grid-template-columns: 266px repeat(4, 265px) 264px; border-top: 1px solid #000; border-bottom: 1px solid #000; background: #2e2e2e; }
  .tab { display: flex; align-items: center; gap: 5px; padding: 0 0 1px 24px; border-right: 1px solid #666; color: #a2a2a2; font-size: 11px; white-space: nowrap; }
  .tab.active { background: #565656; color: #fff; font-weight: 600; border-color: #777; }
  .tab.short { padding-left: 45px; }
  .tab:last-child { border: 0; }
  .tab span { letter-spacing: -.09px; }
  .favicon { width: 16px; height: 16px; }

  /* Page */
  .page { flex: 1; min-height: 0; display: flex; background: #fff; font-family: "Liberation Sans", Arial, sans-serif; color: #333; overflow: hidden; }
  main { position: relative; width: 1575px; overflow: hidden; }
  .board { margin: -44px 0 0 303px; width: 711px; display: flex; flex-direction: column; gap: 19.100px; }
  .row { height: 61px; flex: none; border: 1px solid #e8ecef; border-radius: 31px; display: grid; grid-template-columns: 76.500px 54px 226px 1fr auto; align-items: center; padding-right: 17px; }
  .me { background: #e8ecef; }
  .rank { width: 42px; height: 42px; margin-left: 9px; border-radius: 50%; background: #e8ecef; font-size: 18px; line-height: 40px; display: flex; justify-content: center; }
  .element { width: 30px; height: 30px; margin-top: -5px; }
  .element text { font: bold 11px "Liberation Sans", sans-serif; fill: #8e8e8e; }
  .name { font-size: 18px; white-space: nowrap; display: flex; align-items: center; }
  .name em { font: 11px/19px "Liberation Sans", sans-serif; color: #fff; background: #f0693a; border-radius: 3px; width: 27px; text-align: center; margin-left: 5px; }
  .date { font-size: 14px; white-space: nowrap; padding-bottom: 2px; }
  .date small { font-size: 14px; color: #999; }
  .score { font-size: 15px; letter-spacing: -.1px; white-space: nowrap; display: flex; align-items: center; gap: 5px; }
  .score b { font-weight: 400; font-size: 32px; letter-spacing: -.3px; line-height: 36px; }
  footer { margin-top: 49px; border-top: 2px solid #f0693a; padding: 27px 0 0 303px; display: grid; grid-template-columns: repeat(5, 159px) 160px; }
  .col h4 { margin: 0 0 10px; font-size: 11px; line-height: 14px; letter-spacing: .15px; }
  .col a { display: block; font-size: 11px; line-height: 16px; color: #333; text-decoration: none; white-space: nowrap; letter-spacing: -.02px; }
  .logo { display: flex; align-items: flex-start; gap: 5px; margin-top: 4px; height: 46px; }
  .logo svg { width: 19px; height: 19px; }
  .logo span { font: 600 24px/24px "Open Sans", sans-serif; color: #111; letter-spacing: -1.150px; margin-top: -2px; }
  .follow { width: 155px; height: 30px; border: 1px solid #4a9ce8; border-radius: 15px; display: flex; align-items: center; padding-left: 36px; color: #4a9ce8; font-size: 12px; gap: 7px; }
  .follow svg { width: 23px; height: 23px; fill: #4a9ce8; }
  .brand p { margin: 17px 0 0; font-size: 11px; line-height: 14px; font-weight: 700; color: #8c8c8c; letter-spacing: -.03px; }
  .to-top { position: absolute; right: 8px; bottom: 13px; width: 24px; height: 24px; fill: none; stroke: #f7b39b; stroke-width: 1.200; }
  .scrollbar { width: 15px; border-left: 1px solid #e6e6e6; background: #fafafa; display: flex; align-items: flex-end; padding: 0 0 3px 3px; }
  .scrollbar i { width: 8px; height: 137px; border-radius: 4px; background: #c1c1c1; }

  /* Dock */
  .dock { position: absolute; left: 227px; top: 1018px; width: 1467px; height: 57px; padding-left: 1px; display: flex; border: 1px solid #343434; border-radius: 15px; background: #101010; }
  .slot { width: 48px; display: flex; flex-direction: column; align-items: center; }
  .app { width: 46px; height: 46px; margin-top: 3px; overflow: visible; }
  .slot i { width: 4px; height: 4px; border-radius: 50%; margin-top: 1px; }
  .slot i.on { background: #8d8d8d; }
  .divider { width: 1px; height: 41px; margin: 7px 17px 0 11px; background: #4a4a4a; }
  .bin { width: 34px; height: 44px; margin-top: 4px; }
  .office { font: 700 10.500px Inter, sans-serif; fill: #fff; text-anchor: middle; }
  .month { font: 600 7.500px Inter, sans-serif; fill: #fff; text-anchor: middle; }
  .day { font: 300 23px Inter, sans-serif; fill: #333; text-anchor: middle; }
  .pdf { font: 500 10px Roboto, sans-serif; fill: #fff; text-anchor: middle; }
</style>
